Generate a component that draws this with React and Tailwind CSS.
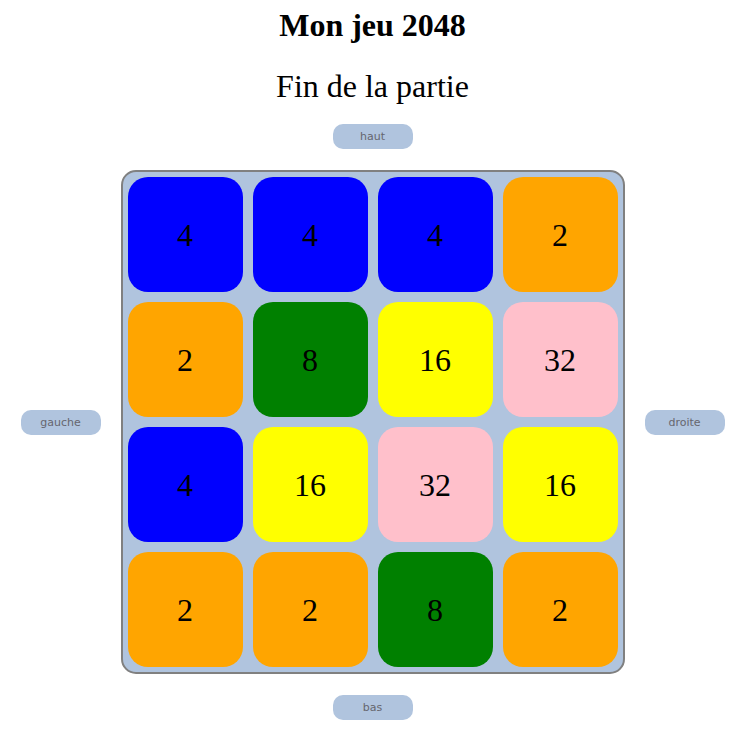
import React from 'react';

const grid = [
  [4, 4, 4, 2],
  [2, 8, 16, 32],
  [4, 16, 32, 16],
  [2, 2, 8, 2],
];

const tileColor = (v) => {
  switch (v) {
    case 2: return 'bg-[#ffa500]';
    case 4: return 'bg-[#0000ff]';
    case 8: return 'bg-[#008000]';
    case 16: return 'bg-[#ffff00]';
    case 32: return 'bg-[#ffc0cb]';
    default: return 'bg-[#b0c4de]';
  }
};

const MoveButton = ({ label }) => (
  <button
    disabled
    className="w-[80px] h-[25px] rounded-[10px] bg-[#b0c4de] text-[11px] text-[#66666e] font-['DejaVu_Sans',sans-serif] leading-none"
  >
    {label}
  </button>
);

const App = () => {
  return (
    <div className="flex flex-col items-center font-['Liberation_Serif',serif] text-black bg-white min-h-[735px]">
      <h1 className="mt-[7px] text-[32px] leading-[37px] font-bold">Mon jeu 2048</h1>
      <h2 className="mt-[24px] text-[32px] leading-[37px]">Fin de la partie</h2>
      <div className="mt-[18px]">
        <MoveButton label="haut" />
      </div>
      <div className="mt-[21px] flex items-center gap-[20px]">
        <MoveButton label="gauche" />
        <div className="w-[504px] h-[504px] border-2 border-[#808080] rounded-[15px] bg-[#b0c4de] p-[5px] grid grid-cols-4 gap-[10px]">
          {grid.flat().map((v, i) => (
            <div
              key={i}
              className={`${tileColor(v)} w-[115px] h-[115px] rounded-[20px] flex items-center justify-center text-[32px]`}
            >
              {v}
            </div>
          ))}
        </div>
        <MoveButton label="droite" />
      </div>
      <div className="mt-[20px]">
        <MoveButton label="bas" />
      </div>
    </div>
  );
};

export default App;
